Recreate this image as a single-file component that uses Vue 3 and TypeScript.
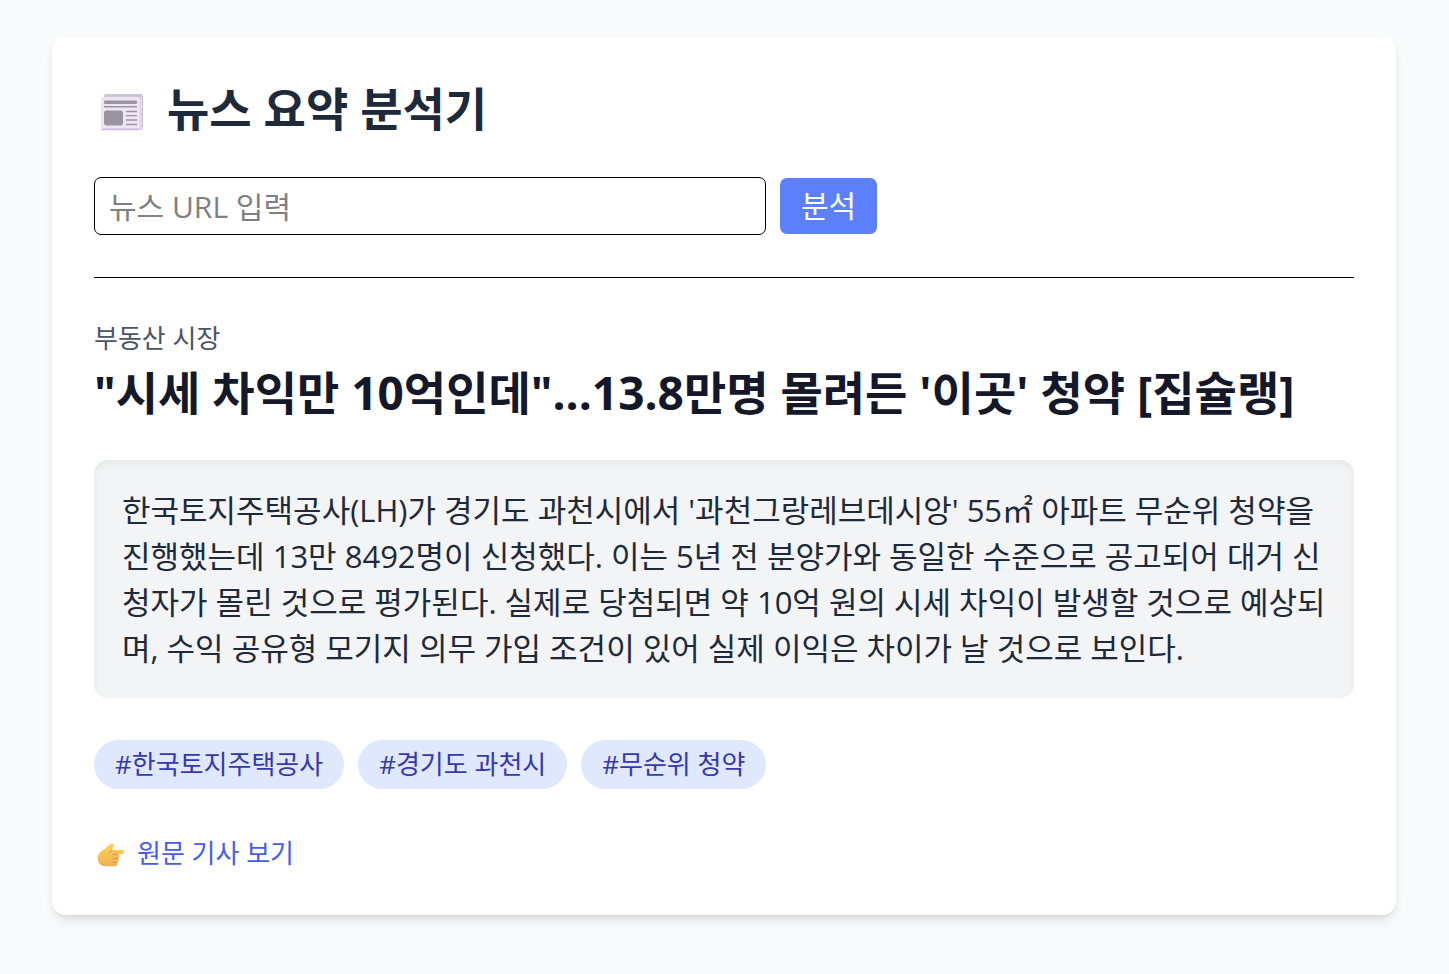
<script setup lang="ts">
import { ref } from 'vue'

const url = ref('')
const category = '부동산 시장'
const title = '"시세 차익만 10억인데"...13.8만명 몰려든 \'이곳\' 청약 [집슐랭]'
const summary = `한국토지주택공사(LH)가 경기도 과천시에서 '과천그랑레브데시앙' 55㎡ 아파트 무순위 청약을
진행했는데 13만 8492명이 신청했다. 이는 5년 전 분양가와 동일한 수준으로 공고되어 대거 신
청자가 몰린 것으로 평가된다. 실제로 당첨되면 약 10억 원의 시세 차익이 발생할 것으로 예상되
며, 수익 공유형 모기지 의무 가입 조건이 있어 실제 이익은 차이가 날 것으로 보인다.`
const tags: string[] = ['한국토지주택공사', '경기도 과천시', '무순위 청약']
</script>

<template>
  <div class="page">
    <main class="card">
      <h1 class="heading">
        <svg class="paper" viewBox="0 0 42 37" aria-hidden="true">
          <rect x="3" y="0" width="39" height="36" rx="2" fill="#cdc5d6" />
          <rect x="38" y="3" width="3" height="32" fill="#ddd5e5" />
          <rect x="0" y="3" width="38.500" height="33.500" rx="1.5" fill="#ece6f3" />
          <rect x="0.5" y="34.5" width="38" height="1.5" fill="#cbb6df" />
          <rect x="3" y="6.5" width="33" height="3.5" rx="1" fill="#9a94a1" />
          <rect x="3" y="12" width="33" height="1.5" fill="#9a94a1" />
          <rect x="3" y="16.5" width="19" height="15" rx="2.5" fill="#9a94a1" />
          <path d="M25 17.5h11M25 21.7h11M25 26h11M25 30.5h11" stroke="#9a94a1" stroke-width="1.3" />
        </svg>
        <span>뉴스 요약 분석기</span>
      </h1>

      <form class="search" @submit.prevent>
        <input v-model="url" class="field" type="text" placeholder="뉴스 URL 입력" aria-label="뉴스 URL 입력" />
        <button class="submit" type="submit">분석</button>
      </form>

      <article class="result">
        <p class="category">{{ category }}</p>
        <h2 class="title">{{ title }}</h2>
        <p class="summary">{{ summary }}</p>
        <ul class="tags">
          <li v-for="tag in tags" :key="tag" class="tag">#{{ tag }}</li>
        </ul>
        <a class="source" href="#">
          <svg class="hand" viewBox="0 0 28 24" aria-hidden="true">
            <defs>
              <linearGradient id="skin" x1="0" y1="0" x2="0" y2="1">
                <stop offset="0" stop-color="#ffd35a" />
                <stop offset="1" stop-color="#edb052" />
              </linearGradient>
            </defs>
            <path
              d="M14.3.6c1.6-.8 3.2.7 2.5 2.3L14.8 7H25c1.5 0 2.2.9 2.2 2s-.7 2.1-2.2 2.1h-4.1c1.4.4 1.9 1.4 1.7 2.5-.2 1-.9 1.6-1.8 1.7.8.5 1.2 1.3 1 2.2-.2 1.1-1 1.7-1.9 1.8.6.5.8 1.1.6 2-.3 1.3-1.3 1.9-2.9 1.9H9C4 23.2.7 20.3.7 15.8c0-4.3 2.2-6.800 5.500-8.800 3.200-2 5.700-4.900 8.100-6.400z"
              fill="url(#skin)"
            />
            <path d="M21 11.3h-5.2M20.8 15.4h-4.6M19.8 19.4h-3.7M14.8 7l-2.3 3" fill="none" stroke="#d28c45" stroke-width="0.9" stroke-linecap="round" />
          </svg>
          <span>원문 기사 보기</span>
        </a>
      </article>
    </main>
  </div>
</template>

<style>
body {
  margin: 0;
  background: #f9fafc;
}
</style>

<style scoped>
.page {
  padding: 37px 53px 59px 52px;
  font-family: "Open Sans", "Noto Sans CJK KR", sans-serif;
  color: #1e2939;
}

.card {
  box-sizing: border-box;
  max-width: 1344px;
  margin: 0 auto;
  padding: 42px;
  border-radius: 14px;
  background: #fff;
  box-shadow: 0 7px 11px -2px rgba(0, 0, 0, 0.1), 0 4px 7px -4px rgba(0, 0, 0, 0.1);
}

.heading {
  display: flex;
  align-items: center;
  gap: 24px;
  margin: 0 0 40px;
  padding-left: 7px;
  font-size: 46px;
  line-height: 58px;
  font-weight: 700;
}

.paper {
  width: 42px;
  height: 37px;
  margin-top: 8px;
}

.search {
  display: flex;
  align-items: center;
  gap: 14px;
  padding-bottom: 42px;
  border-bottom: 1px solid #000;
}

.field {
  box-sizing: border-box;
  flex: 0 1 672px;
  min-width: 0;
  height: 58px;
  padding: 0 14px;
  border: 1px solid #000;
  border-radius: 7px;
  background: #fff;
  font: inherit;
  font-size: 30px;
  color: inherit;
}

.field::placeholder {
  color: #808080;
  opacity: 1;
}

.submit {
  height: 56px;
  padding: 0 21px;
  border: 0;
  border-radius: 7px;
  background: #5c80fc;
  color: #fff;
  font: inherit;
  font-size: 30px;
  line-height: 56px;
}

.result {
  padding-top: 42px;
}

.category {
  margin: 0 0 8px;
  font-size: 26px;
  line-height: 36px;
  color: #4a5565;
}

.title {
  margin: 0;
  font-size: 46px;
  line-height: 56px;
  font-weight: 700;
  color: #141828;
}

.summary {
  margin: 40px 0 42px;
  padding: 27px 28px;
  border-radius: 14px;
  background: #f3f4f6;
  box-shadow: inset 0 4px 7px rgba(0, 0, 0, 0.05);
  font-size: 31px;
  line-height: 46px;
  white-space: pre-line;
}

.tags {
  display: flex;
  flex-wrap: wrap;
  gap: 14px;
  margin: 0 0 44px;
  padding: 0;
  list-style: none;
}

.tag {
  padding: 0 21px;
  border-radius: 25px;
  background: #e0e8fd;
  color: #3538b0;
  font-size: 26px;
  line-height: 49px;
}

.source {
  display: inline-flex;
  align-items: center;
  gap: 12px;
  padding-left: 3px;
  color: #465cf0;
  font-size: 26px;
  line-height: 40px;
  text-decoration: none;
}

.hand {
  width: 28px;
  height: 24px;
  margin-top: 4px;
}
</style>
